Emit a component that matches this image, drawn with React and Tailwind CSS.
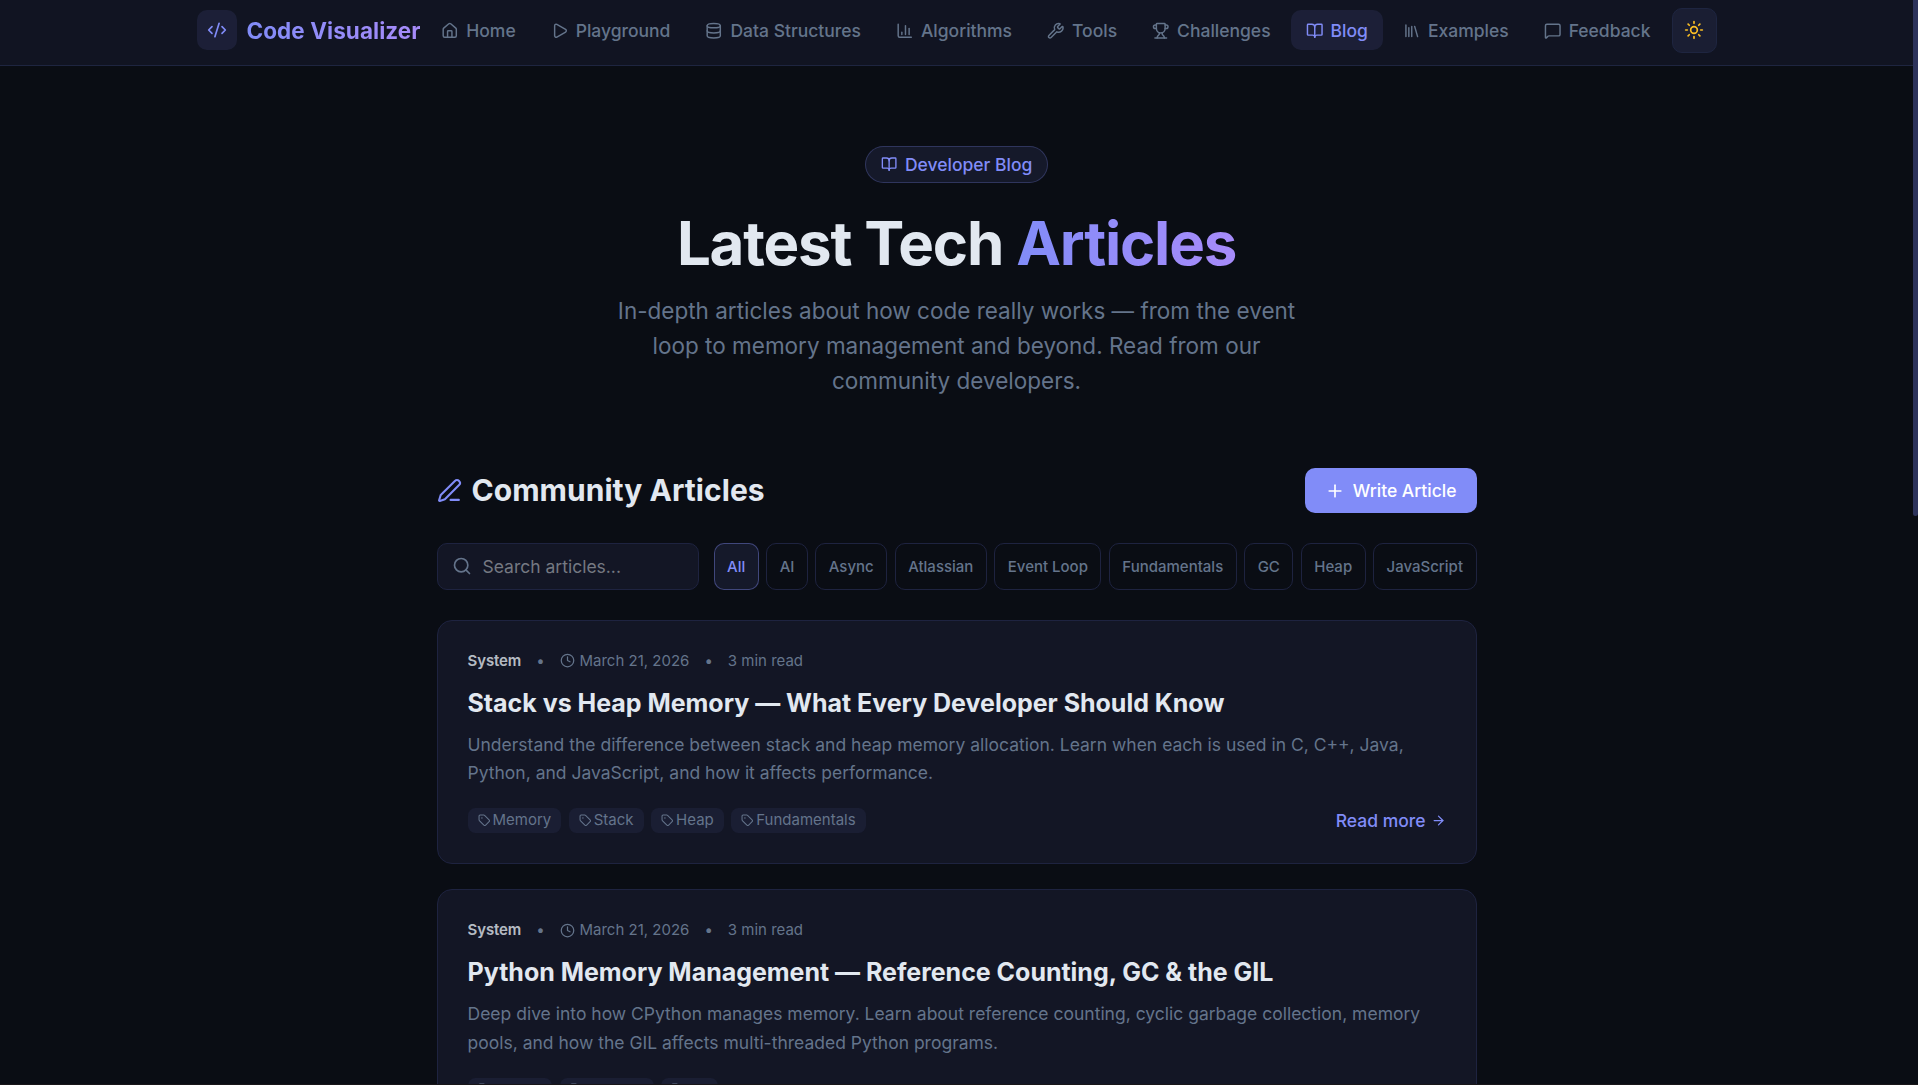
import { useState } from 'react'
import {
  ArrowRight,
  BookOpen,
  ChartColumn,
  Clock,
  CodeXml,
  Database,
  House,
  Library,
  MessageSquare,
  PenLine,
  Play,
  Plus,
  Search,
  Sun,
  Tag,
  Trophy,
  Wrench,
} from 'lucide-react'

const navItems = [
  { label: 'Home', icon: House },
  { label: 'Playground', icon: Play },
  { label: 'Data Structures', icon: Database },
  { label: 'Algorithms', icon: ChartColumn },
  { label: 'Tools', icon: Wrench },
  { label: 'Challenges', icon: Trophy },
  { label: 'Blog', icon: BookOpen },
  { label: 'Examples', icon: Library },
  { label: 'Feedback', icon: MessageSquare },
]

const categories = ['All', 'AI', 'Async', 'Atlassian', 'Event Loop', 'Fundamentals', 'GC', 'Heap', 'JavaScript']

const articles = [
  {
    title: 'Stack vs Heap Memory — What Every Developer Should Know',
    excerpt:
      'Understand the difference between stack and heap memory allocation. Learn when each is used in C, C++, Java, Python, and JavaScript, and how it affects performance.',
    author: 'System',
    date: 'March 21, 2026',
    readTime: '3 min read',
    tags: ['Memory', 'Stack', 'Heap', 'Fundamentals'],
  },
  {
    title: 'Python Memory Management — Reference Counting, GC & the GIL',
    excerpt:
      'Deep dive into how CPython manages memory. Learn about reference counting, cyclic garbage collection, memory pools, and how the GIL affects multi-threaded Python programs.',
    author: 'System',
    date: 'March 21, 2026',
    readTime: '3 min read',
    tags: ['Python', 'Memory', 'GC'],
  },
]

function Navbar() {
  return (
    <header className="h-[66px] pb-[5px] bg-[#111422] border-b border-[#1e2540]">
      <div className="w-[1520px] h-full mx-auto flex items-center justify-between">
        <a href="#" className="flex items-center gap-2.5 shrink-0">
          <span className="w-10 h-10 rounded-[10px] bg-[#818cf8]/10 flex items-center justify-center">
            <CodeXml size={20} className="text-[#818cf8]" />
          </span>
          <span className="text-[22.5px] leading-[35px] tracking-[0.06px] font-bold bg-linear-to-r from-[#818cf8] to-[#a78bfa] bg-clip-text text-transparent">
            Code Visualizer
          </span>
        </a>
        <div className="flex items-center gap-[6px]">
          <nav className="flex items-center gap-[5px]">
            {navItems.map(({ label, icon: Icon }) => (
              <a
                key={label}
                href="#"
                className={`flex items-center gap-[7.5px] px-[15px] py-[7.5px] rounded-[10px] text-[17.5px] leading-[25px] font-medium whitespace-nowrap ${
                  label === 'Blog' ? 'bg-[#818cf8]/10 text-[#818cf8]' : 'text-[#64748b]'
                }`}
              >
                <Icon size={17.5} className="relative top-[0.5px]" />
                {label}
              </a>
            ))}
          </nav>
          <button className="w-[45px] h-[45px] rounded-[10px] bg-[#1a1e33] border border-[#1e2540] text-[#fbbf24] flex items-center justify-center">
            <Sun size={20} />
          </button>
        </div>
      </div>
    </header>
  )
}

function Hero() {
  return (
    <section className="flex flex-col items-center text-center">
      <div className="flex items-center gap-2 px-[15px] py-[5px] mb-[30px] rounded-full bg-[#818cf8]/10 border border-[#818cf8]/25 text-[#818cf8] text-[17.5px] leading-[25px] font-medium">
        <BookOpen size={16.25} />
        Developer Blog
      </div>
      <h1 className="mb-5 text-6xl leading-none font-bold tracking-[-0.02em] text-[#e2e8f0]">
        Latest Tech{' '}
        <span className="bg-linear-to-r from-[#818cf8] to-[#a78bfa] bg-clip-text text-transparent">Articles</span>
      </h1>
      <p className="w-[700px] text-[22.5px] leading-[35px] text-[#64748b]">
        In-depth articles about how code really works — from the event loop to memory management and beyond. Read from
        our community developers.
      </p>
    </section>
  )
}

function ArticleCard({ article }) {
  return (
    <article className="p-[30px] rounded-[15px] bg-[#131625] border border-[#1e2340]">
      <div className="mb-[15px] flex items-center gap-[15px] text-[15px] leading-5 text-[#64748b]">
        <span className="font-semibold tracking-[-0.1px] text-[#e2e8f0]/80">{article.author}</span>
        <span>•</span>
        <span className="flex items-center gap-[4.8px]">
          <Clock size={15} />
          {article.date}
        </span>
        <span>•</span>
        <span>{article.readTime}</span>
      </div>
      <h3 className="mb-2.5 text-[25px] leading-[35px] tracking-[-0.02px] font-bold text-[#e2e8f0]">
        {article.title}
      </h3>
      <p className="mb-5 text-[17.5px] leading-[28.4px] text-[#64748b]">{article.excerpt}</p>
      <div className="flex items-center justify-between">
        <div className="flex gap-[7.5px]">
          {article.tags.map(tag => (
            <span
              key={tag}
              className="flex items-center gap-[2.5px] px-2.5 pt-[2px] pb-[3px] rounded-[7.5px] bg-[#1a1e33] text-[15px] leading-5 text-[#64748b]"
            >
              <Tag size={12.5} />
              {tag}
            </span>
          ))}
        </div>
        <a href="#" className="flex items-center gap-[5px] pt-px text-[17.5px] leading-[25px] font-medium text-[#818cf8]">
          Read more
          <ArrowRight size={15} />
        </a>
      </div>
    </article>
  )
}

export default function App() {
  const [query, setQuery] = useState('')
  const [active, setActive] = useState('All')

  return (
    <div className="h-screen overflow-hidden flex bg-[#0a0d14] font-['Inter',sans-serif] text-[#e2e8f0]">
      <div className="w-[1913px] shrink-0">
        <Navbar />
        <main className="w-[1040px] mx-auto pt-20">
          <Hero />
          <section className="mt-[69.5px]">
            <div className="mb-[30px] flex items-center justify-between">
              <h2 className="flex items-center gap-2.5 text-[30px] leading-10 tracking-[0.04px] font-bold">
                <PenLine size={25} className="text-[#818cf8]" />
                Community Articles
              </h2>
              <button className="flex items-center gap-[7.5px] px-5 py-2.5 rounded-[10px] bg-[#818cf8] text-white text-[17.5px] leading-[25px] font-medium">
                <Plus size={20} className="relative top-[0.5px]" />
                Write Article
              </button>
            </div>

            <div className="mb-[30px] flex gap-[15px]">
              <label className="flex-1 min-w-0 h-[47px] pl-[14px] pr-[15px] flex items-center gap-[11px] rounded-[10px] bg-[#131625] border border-[#1e2340]">
                <Search size={20} className="shrink-0 text-[#64748b]" />
                <input
                  value={query}
                  onChange={e => setQuery(e.target.value)}
                  placeholder="Search articles..."
                  className="w-full min-w-0 bg-transparent outline-none text-[17.5px] leading-[25px] placeholder:text-[#757982]"
                />
              </label>
              <div className="flex gap-[7.4px]">
                {categories.map(c => (
                  <button
                    key={c}
                    onClick={() => setActive(c)}
                    className={`px-[12.5px] pt-[2px] rounded-[10px] border text-[15px] leading-5 font-medium whitespace-nowrap ${
                      c === active
                        ? 'bg-[#818cf8]/10 border-[#818cf8]/40 text-[#818cf8]'
                        : 'border-[#1e2340] text-[#64748b]'
                    }`}
                  >
                    {c}
                  </button>
                ))}
              </div>
            </div>

            <div className="flex flex-col gap-[25px]">
              {articles.map(a => (
                <ArticleCard key={a.title} article={a} />
              ))}
            </div>
          </section>
        </main>
      </div>
      <div className="w-[5px] h-[516px] rounded-b-[3px] bg-[#2d335b]" />
      <div className="fixed inset-x-0 bottom-0 h-px bg-[#191619]" />
    </div>
  )
}
